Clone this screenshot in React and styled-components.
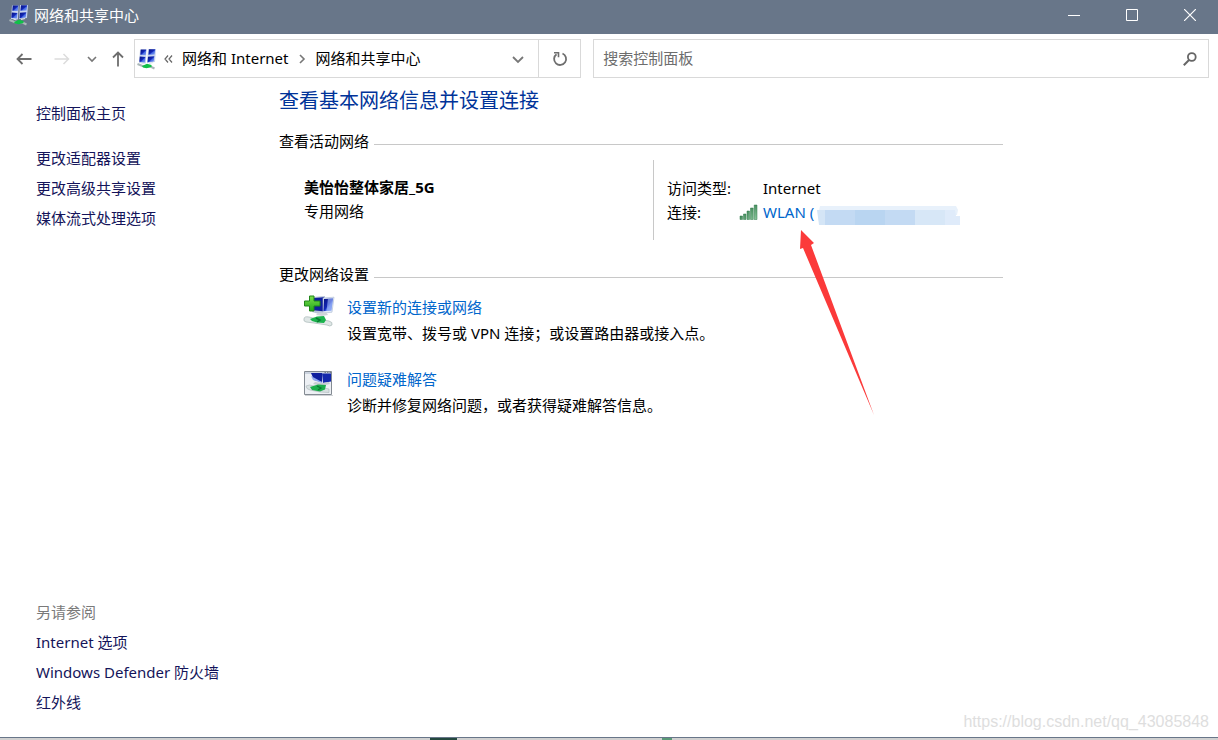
import React from 'react';
import styled, { createGlobalStyle } from 'styled-components';

const sideTasks = ['更改适配器设置', '更改高级共享设置', '媒体流式处理选项'];
const seeAlso = ['Internet 选项', 'Windows Defender 防火墙', '红外线'];

const Defs = () => (
  <HiddenSvg width="0" height="0" aria-hidden="true">
    <defs>
      <linearGradient id="screen" x1="0" y1="0" x2="1" y2="1">
        <stop offset="0" stopColor="#06107a" />
        <stop offset="0.5" stopColor="#1228b8" />
        <stop offset="0.62" stopColor="#4a6ee6" />
        <stop offset="1" stopColor="#86a4f4" />
      </linearGradient>
      <linearGradient id="signal" x1="0" y1="0" x2="1" y2="1">
        <stop offset="0" stopColor="#14622f" />
        <stop offset="1" stopColor="#8fc9a0" />
      </linearGradient>
      <linearGradient id="plus" x1="0" y1="0" x2="0" y2="1">
        <stop offset="0" stopColor="#7be04a" />
        <stop offset="1" stopColor="#22a51c" />
      </linearGradient>
    </defs>
  </HiddenSvg>
);

const NetworkIcon = () => (
  <svg width="20" height="22" viewBox="0 0 20 22" aria-hidden="true">
    <path d="M3 1.500l6.500 0-.6 14-6.900-.5zM11 1l8 0-1 13-8 1z" fill="#c6d3ee" />
    <g fill="url(#screen)">
      <path d="M3.800 1.500h5.500l-.5 5.500-5.500-.3z" />
      <path d="M12 1.300h6.200l-.6 5.200-6.200.2z" />
      <path d="M2.800 8.500l5.600.4-.5 5.600-5.600-.8z" />
      <path d="M11 8.700l6.300-.5-.6 5.300-6.200.8z" />
    </g>
    <path d="M4.500 15l3 1M12 15.500l4-1" stroke="#dde3e8" strokeWidth="1.200" />
    <path d="M.5 16l5 2 3 .5 5 0 4 2" fill="none" stroke="#aab7b8" strokeWidth="2" />
    <path d="M5 18l5-2.200 4.500 1.200v2l-5 1.200-3.500-.7z" fill="#10c048" />
  </svg>
);

const NewConnectionIcon = () => (
  <svg width="32" height="34" viewBox="0 0 32 34" aria-hidden="true">
    <path d="M10 3l12-1-1 17-5 1-7-2z" fill="#b9c4d8" />
    <path d="M11 4l10-.8-1 14-10-1z" fill="#0f1f9e" />
    <path d="M20 4l11-.8-2 15-9 1z" fill="#e3ebf8" stroke="#a9b8d2" strokeWidth="0.600" />
    <path d="M21 5l9-.6-1.600 12.200-8 .7z" fill="url(#screen)" />
    <path d="M25 4.700l5-.3-1.600 12.200-5 .5z" fill="#a9c0fa" opacity="0.6" />
    <path d="M15 19l-2 2 6 1 6-1-2-3z" fill="#cfd5da" />
    <path d="M1 25q0-3 5-2l8 2 12 2q4 1 3 4-2 2-5 0l-13-2-8-1q-3-1-2-3z" fill="#dfe7e6" stroke="#a9b8b8" strokeWidth="0.700" />
    <path d="M7 25l7-2.500 7-.5 2 4-2 3-7-.5-5-1.500z" fill="#1bb34d" />
    <path d="M13 24l4 2-3 2" fill="none" stroke="#0a7a32" strokeWidth="1.500" />
    <path d="M6.500 2h4.500v5h6v5h-6v5H6.500v-5h-5V7h5z" fill="url(#plus)" stroke="#20861a" />
  </svg>
);

const TroubleshootIcon = () => (
  <svg width="32" height="34" viewBox="0 0 32 34" aria-hidden="true">
    <path d="M2 29.500h28" stroke="#d0d3d6" />
    <path d="M1.500 5.500h27v23h-27z" fill="#edf0f4" stroke="#848b93" />
    <path d="M2 6h26v2H2z" fill="#cbd3df" />
    <path d="M8 7l11 0v9l-8-2z" fill="#0f1f9e" />
    <path d="M8 10l11 6v1l-9-3z" fill="#8fa6ee" />
    <path d="M19 7.500h9v8l-8 1.500z" fill="#1428ac" />
    <path d="M21.500 6.500h1.500m1 0h1.500m1 0h1.500" stroke="#77808c" />
    <path d="M12 16l-2 2 8 2 9-2-1-2-7 1z" fill="#c6cdd2" />
    <path d="M3 20q3-2 8 0l15 3v3.500l-9-.5-10-2q-4-1-4-4z" fill="#d9e1e2" stroke="#a9b5b8" strokeWidth="0.600" />
    <path d="M7 21l8-2.500 8 .5-1 4.500-5 2-8-1.500z" fill="#1cae4c" />
    <path d="M14 20l4 2-3 2" fill="none" stroke="#0a7a32" strokeWidth="1.300" />
  </svg>
);

const SignalIcon = () => (
  <svg width="20" height="16" viewBox="0 0 20 16" aria-hidden="true">
    <g fill="url(#signal)" stroke="#2f7a4a" strokeWidth="0.500">
      <path d="M1 12h2.500v3.500H1zM4.500 10H7v5.500H4.500zM8 7h2.500v8.500H8zM11.500 4h2.700v11.500h-2.700zM15.200 1H18v14.500h-2.800z" />
    </g>
  </svg>
);

const Chevron = ({ right }) => (
  <svg width="10" height="10" viewBox="0 0 10 10" aria-hidden="true">
    <path d={right ? 'M3 1l4 4-4 4' : 'M1 3l4 4 4-4'} fill="none" stroke="#777" strokeWidth="1.600" />
  </svg>
);

const BackArrow = () => (
  <svg width="16" height="14" viewBox="0 0 16 14" aria-hidden="true">
    <path d="M6.500 2L1.500 7l5 5M1.500 7h14" fill="none" stroke="currentColor" strokeWidth="1.800" />
  </svg>
);

const Redaction = () => (
  <Mask width="144" height="20" viewBox="0 0 144 20" aria-hidden="true">
    <path d="M3 0h136l2 4-1 5H1z" fill="#e8f1fb" />
    <path d="M0 4h8v15H2z" fill="#d4e5f6" />
    <path d="M8 4h30v15H8z" fill="#c3daf3" />
    <path d="M38 4h30v15H38z" fill="#b9d5f1" />
    <path d="M68 4h30v15H68z" fill="#c3daf3" />
    <path d="M98 4h30v15H98z" fill="#d7e7f7" />
    <path d="M128 4h10l1 6h4v9h-15z" fill="#dfebfa" />
  </Mask>
);

const App = () => {
  return <Window>
    <GlobalStyle />
    <Defs />
    <TitleBar>
      <NetworkIcon />
      <Caption>网络和共享中心</Caption>
      <CaptionButton aria-label="最小化">
        <svg width="12" height="13"><path d="M0 6.500h12" stroke="#fff" /></svg>
      </CaptionButton>
      <CaptionButton aria-label="最大化">
        <svg width="12" height="12"><path d="M.5.5h11v11H.5z" fill="none" stroke="#fff" /></svg>
      </CaptionButton>
      <CaptionButton aria-label="关闭">
        <svg width="12" height="12"><path d="M0 0l12 12M12 0L0 12" stroke="#fff" strokeWidth="1.200" /></svg>
      </CaptionButton>
    </TitleBar>
    <NavBar>
      <NavButton $width={38} aria-label="后退"><BackArrow /></NavButton>
      <NavButton $width={38} aria-label="前进" disabled>
        <svg width="16" height="14" viewBox="0 0 16 14">
          <path d="M9.500 2l5 5-5 5M14.500 7H.5" fill="none" stroke="currentColor" strokeWidth="1.500" />
        </svg>
      </NavButton>
      <NavButton $width={22} aria-label="最近浏览的位置"><Chevron /></NavButton>
      <NavButton $width={30} aria-label="向上">
        <svg width="14" height="16" viewBox="0 0 14 16">
          <path d="M2 6.500l5-5 5 5M7 1.500v14" fill="none" stroke="currentColor" strokeWidth="1.800" />
        </svg>
      </NavButton>
      <AddressBar>
        <Crumbs aria-label="地址">
          <NetworkIcon />
          <CrumbButton aria-label="上级">
            <svg width="9" height="8" viewBox="0 0 9 8">
              <path d="M4 .5L1 4l3 3.500M8 .5L5 4l3 3.500" fill="none" stroke="#666" strokeWidth="1.200" />
            </svg>
          </CrumbButton>
          <Crumb href="#internet">网络和 Internet</Crumb>
          <Chevron right />
          <Crumb href="#center">网络和共享中心</Crumb>
        </Crumbs>
        <NavButton $width={40} aria-label="以前的位置">
          <svg width="12" height="10" viewBox="0 0 12 10">
            <path d="M1 3l5 5 5-5" fill="none" stroke="#777" strokeWidth="1.800" />
          </svg>
        </NavButton>
        <RefreshButton $width={42} aria-label="刷新">
          <svg width="16" height="16" viewBox="0 0 16 16">
            <path d="M4.500 3.200A6 6 0 1 0 10.500 2.500" fill="none" stroke="currentColor" strokeWidth="1.800" />
            <path d="M2 1.800h4.500v4.500" fill="none" stroke="currentColor" strokeWidth="1.600" />
          </svg>
        </RefreshButton>
      </AddressBar>
      <SearchBox>
        <SearchInput type="text" placeholder="搜索控制面板" aria-label="搜索控制面板" />
        <svg width="14" height="14" viewBox="0 0 14 14" aria-hidden="true">
          <circle cx="8.800" cy="5" r="3.900" fill="none" stroke="#666" strokeWidth="1.800" />
          <path d="M6 8L.8 13.200" stroke="#666" strokeWidth="2" />
        </svg>
      </SearchBox>
    </NavBar>
    <Body>
      <Sidebar>
        <SideLink href="#home">控制面板主页</SideLink>
        <SideGroup>
          {sideTasks.map((task) => <SideLink key={task} href="#task">{task}</SideLink>)}
        </SideGroup>
        <SeeAlso>
          <SideLabel>另请参阅</SideLabel>
          {seeAlso.map((item) => <SideLink key={item} href="#see">{item}</SideLink>)}
        </SeeAlso>
      </Sidebar>
      <Main>
        <Heading>查看基本网络信息并设置连接</Heading>
        <SectionTitle>查看活动网络</SectionTitle>
        <ActiveNetwork>
          <NetworkName>
            <strong>美怡怡整体家居_5G</strong>
            <span>专用网络</span>
          </NetworkName>
          <Details>
            <dt>访问类型:</dt>
            <dd>Internet</dd>
            <dt>连接:</dt>
            <Connection>
              <SignalIcon />
              <TextLink href="#wlan">WLAN (</TextLink>
              <Redaction />
              <Pointer width="76" height="188" viewBox="0 0 76 188" aria-hidden="true">
                <path d="M2 1l13 13-3 2 63 170L4 19l-3 1z" fill="#fb3a3a" />
              </Pointer>
            </Connection>
          </Details>
        </ActiveNetwork>
        <SectionTitle>更改网络设置</SectionTitle>
        <Tasks>
          <Task>
            <NewConnectionIcon />
            <div>
              <TextLink href="#new">设置新的连接或网络</TextLink>
              <p>设置宽带、拨号或 VPN 连接；或设置路由器或接入点。</p>
            </div>
          </Task>
          <Task>
            <TroubleshootIcon />
            <div>
              <TextLink href="#fix">问题疑难解答</TextLink>
              <p>诊断并修复网络问题，或者获得疑难解答信息。</p>
            </div>
          </Task>
        </Tasks>
      </Main>
      <Watermark>https://blog.csdn.net/qq_43085848</Watermark>
    </Body>
    <Behind />
  </Window>
}

export default App;

const GlobalStyle = createGlobalStyle`
  * {
    box-sizing: border-box;
  }
  body {
    margin: 0;
    background: white;
  }
  body, button, input {
    font-family: "Noto Sans", "Noto Sans CJK SC", sans-serif;
    font-size: 15px;
    color: black;
  }
  button {
    border: 0;
    padding: 0;
    background: none;
  }
  a {
    text-decoration: none;
  }
  svg {
    flex-shrink: 0;
  }
`;

const HiddenSvg = styled.svg`
  position: absolute;
`;

const Window = styled.div`
  display: flex;
  flex-direction: column;
  min-height: 100vh;
`;

const TitleBar = styled.header`
  display: flex;
  align-items: center;
  height: 34px;
  padding: 0 0 4px 9px;
  background-color: #687689;
`;

const Caption = styled.div`
  flex: 1;
  margin-left: 5px;
  line-height: 30px;
  color: white;
`;

const CaptionButton = styled.button`
  display: flex;
  align-items: center;
  justify-content: center;
  width: 58px;
  height: 30px;
  padding-left: 2px;
`;

const NavBar = styled.nav`
  display: flex;
  height: 44px;
  padding: 5px 9px 0 5px;
`;

const NavButton = styled.button`
  display: flex;
  align-items: center;
  justify-content: center;
  flex-shrink: 0;
  width: ${({ $width }) => $width}px;
  color: #6e6e6e;
  &:disabled{
    color: #dcdcdc;
  }
`;

const AddressBar = styled.div`
  display: flex;
  flex: 447;
  margin: 0 12px 0 1px;
  border: 1px solid #d9d9d9;
`;

const RefreshButton = styled(NavButton)`
  border-left: 1px solid #d9d9d9;
`;

const Crumbs = styled.div`
  display: flex;
  align-items: center;
  flex: 1;
  padding-left: 2px;
`;

const CrumbButton = styled.button`
  display: flex;
  margin: 0 9px 0 7px;
`;

const Crumb = styled.a`
  color: black;
  padding-bottom: 2px;
  & + svg{
    margin: 0 8px 0 9px;
  }
`;

const SearchBox = styled.div`
  display: flex;
  align-items: center;
  flex: 616;
  border: 1px solid #d9d9d9;
  svg{
    margin-right: 11px;
  }
`;

const SearchInput = styled.input`
  flex: 1;
  border: 0;
  padding: 0 0 2px 9px;
  outline: none;
  &::placeholder{
    color: #6d6d6d;
    opacity: 1;
  }
`;

const Body = styled.div`
  position: relative;
  display: flex;
  flex: 1;
  border-bottom: 1px solid #687689;
`;

const Sidebar = styled.aside`
  display: flex;
  flex-direction: column;
  width: 279px;
  padding: 20px 0 20px 36px;
  line-height: 30px;
`;

const SideLink = styled.a`
  color: #14145a;
`;

const SideGroup = styled.div`
  display: flex;
  flex-direction: column;
  margin-top: 15px;
`;

const SeeAlso = styled(SideGroup)`
  margin-top: auto;
`;

const SideLabel = styled.div`
  color: #7a7a7a;
`;

const Main = styled.main`
  flex: 1;
  max-width: 724px;
  line-height: 24px;
`;

const Heading = styled.h1`
  margin: 7px 0 12px;
  font-size: 20px;
  font-weight: 400;
  line-height: 32px;
  color: #003399;
`;

const SectionTitle = styled.h2`
  display: flex;
  align-items: center;
  gap: 5px;
  margin: 0;
  font-size: 15px;
  font-weight: 400;
  &::after{
    content: '';
    flex: 1;
    height: 1px;
    margin-top: 7px;
    background-color: #c8c8c8;
  }
`;

const ActiveNetwork = styled.section`
  display: flex;
  height: 80px;
  margin: 7px 0 22px;
`;

const NetworkName = styled.div`
  display: flex;
  flex-direction: column;
  width: 374px;
  padding: 15px 0 0 25px;
`;

const Details = styled.dl`
  display: grid;
  grid-template-columns: 96px 1fr;
  grid-auto-rows: 24px;
  flex: 1;
  margin: 0;
  padding: 16px 0 0 13px;
  border-left: 1px solid #c8c8c8;
  dd{
    margin: 0;
  }
`;

const Connection = styled.dd`
  position: relative;
  display: flex;
  align-items: center;
  && {
    margin-left: -24px;
  }
  gap: 4px;
`;

const Mask = styled.svg`
  position: absolute;
  left: 78px;
  top: 6px;
`;

const Pointer = styled.svg`
  position: absolute;
  left: 60px;
  top: 29px;
`;

const TextLink = styled.a`
  color: #0066cc;
`;

const Tasks = styled.section`
  display: flex;
  flex-direction: column;
  gap: 20px;
  padding: 8px 0 0 24px;
`;

const Task = styled.div`
  display: flex;
  gap: 12px;
  line-height: 26px;
  p{
    margin: 0;
  }
`;

const Watermark = styled.div`
  position: absolute;
  right: 9px;
  bottom: 6px;
  font-family: "Liberation Sans", sans-serif;
  font-size: 16px;
  color: #dedede;
`;

const Behind = styled.footer`
  height: 2px;
  background: linear-gradient(90deg, #d0d0d0 430px, #24483f 430px, #24483f 457px, #d0d0d0 457px, #d0d0d0 662px, #5a9a78 662px, #5a9a78 672px, #d0d0d0 672px);
`;
